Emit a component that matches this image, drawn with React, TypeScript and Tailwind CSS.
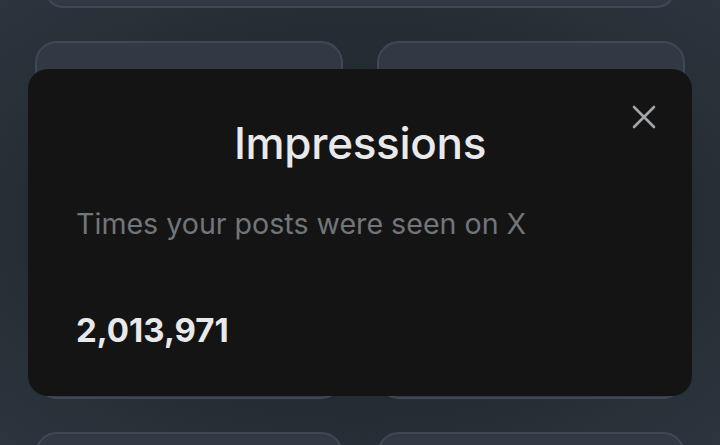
import React from 'react';

const Card: React.FC<{ className?: string }> = ({ className = '' }) => (
  <div className={`rounded-[22px] border-2 border-[#3f4955] bg-[#313a44] ${className}`} />
);

const CloseIcon: React.FC = () => (
  <svg width="24" height="24" viewBox="0 0 24 24" fill="none" stroke="currentColor" strokeWidth="2.6" strokeLinecap="round">
    <path d="M2 2 L22 22 M22 2 L2 22" />
  </svg>
);

export default function App(): React.ReactNode {
  return (
    <div
      className="relative h-[445px] w-[720px] overflow-hidden bg-[radial-gradient(ellipse_at_center,#20272e_0%,#252c33_60%,#2c353e_100%)]"
      style={{ fontFamily: 'Inter, "Noto Sans", sans-serif' }}
    >
      {/* page behind the sheet */}
      <Card className="mx-[44px] -mt-[32px] h-[40px]" />
      <div className="mt-[33px] grid grid-cols-2 gap-x-[34px] gap-y-[33px] px-[35px]">
        <Card className="h-[358px]" />
        <Card className="h-[358px]" />
        <Card className="h-[358px]" />
        <Card className="h-[358px]" />
      </div>

      {/* info sheet */}
      <div className="absolute left-[28px] top-[69px] flex h-[327px] w-[664px] flex-col rounded-[20px] bg-[#141414] px-[48px] pt-[52px]">
        <button className="absolute right-[36px] top-[36px] text-[#a3a6a9]">
          <CloseIcon />
        </button>
        <h2 className="text-center text-[44px] font-medium leading-[44px] tracking-[-0.3px] text-[#e7e9ea]">Impressions</h2>
        <p className="mt-[41px] text-[28.6px] leading-[36px] text-[#71767b]">Times your posts were seen on X</p>
        <p className="mt-[68px] text-[33px] font-bold leading-[40px] text-[#e7e9ea]">2,013,971</p>
      </div>
    </div>
  );
}
